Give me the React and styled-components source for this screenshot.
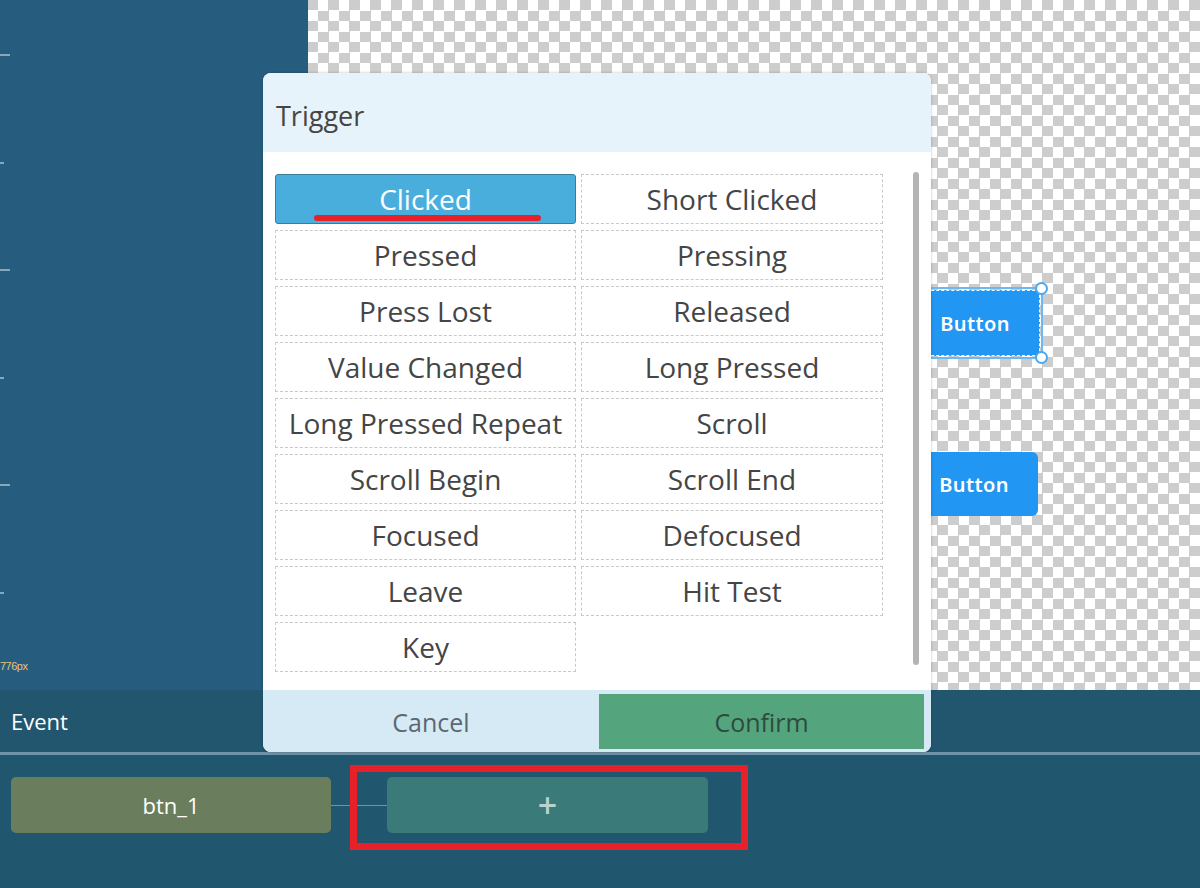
import React from 'react';
import styled, { createGlobalStyle } from 'styled-components';

const GlobalStyle = createGlobalStyle`
  html, body {
    margin: 0;
    padding: 0;
    background: #21566f;
    font-family: "Open Sans", "Noto Sans", sans-serif;
  }
`;

const triggers = [
  'Clicked',
  'Short Clicked',
  'Pressed',
  'Pressing',
  'Press Lost',
  'Released',
  'Value Changed',
  'Long Pressed',
  'Long Pressed Repeat',
  'Scroll',
  'Scroll Begin',
  'Scroll End',
  'Focused',
  'Defocused',
  'Leave',
  'Hit Test',
  'Key',
];

const Page = styled.div`
  position: relative;
  width: 1200px;
  height: 888px;
  overflow: hidden;
  display: flex;
  flex-direction: column;
  background: #21566f;
`;

const Workspace = styled.div`
  height: 690px;
  display: flex;
`;

const SidePanel = styled.div`
  width: 308px;
  background: #265d7f;
  display: flex;
  flex-direction: column;
`;

const Ruler = styled.div`
  display: flex;
  flex-direction: column;
  gap: 105.6px;
  padding-top: 54px;
`;

const Tick = styled.div`
  height: 2px;
  width: ${(p) => (p.long ? '10px' : '4px')};
  background: #86a8bd;
`;

const SizeLabel = styled.div`
  margin-top: auto;
  margin-bottom: 18px;
  font-family: "Liberation Sans", sans-serif;
  font-size: 11px;
  letter-spacing: -0.5px;
  color: #e6c27a;
`;

const Checker = styled.div`
  position: relative;
  flex: 1;
  background-color: #ffffff;
  background-image: conic-gradient(
    #cdcdcd 25%,
    #ffffff 0 50%,
    #cdcdcd 0 75%,
    #ffffff 0
  );
  background-size: 21px 21px;
  background-position: 10px 0;
`;

const CanvasButton = styled.div`
  position: absolute;
  left: 602px;
  top: ${(p) => p.top}px;
  width: ${(p) => p.w}px;
  height: ${(p) => p.h}px;
  background: #2196f3;
  border-radius: 6px;
  color: #fff;
  font-family: "Noto Sans", sans-serif;
  font-weight: 600;
  font-size: 20px;
  letter-spacing: 0.4px;
  display: flex;
  align-items: center;
  justify-content: center;
  box-sizing: border-box;
`;

const Selection = styled.div`
  position: absolute;
  left: 600px;
  top: 287px;
  width: 135px;
  height: 72px;
  border: 2px solid #6bb8f2;
  box-sizing: border-box;
  outline: 1px dashed #ffffff;
  outline-offset: -4px;
`;

const Handle = styled.div`
  position: absolute;
  right: -7px;
  ${(p) => (p.bottom ? 'bottom: -7px;' : 'top: -7px;')}
  width: 9px;
  height: 9px;
  border-radius: 50%;
  background: #fff;
  border: 2px solid #4aa8f0;
`;

const EventBar = styled.div`
  height: 62px;
  background: #22566f;
  display: flex;
  align-items: center;
  padding-left: 11px;
  color: #ffffff;
  font-size: 22px;
`;

const Divider = styled.div`
  height: 3px;
  background: #6f93a8;
`;

const Flow = styled.div`
  flex: 1;
  display: flex;
  align-items: flex-start;
  padding: 22px 11px 0;
`;

const Node = styled.div`
  position: relative;
  width: ${(p) => p.w}px;
  height: 56px;
  border-radius: 5px;
  background: ${(p) => p.bg};
  color: ${(p) => p.fg};
  display: flex;
  align-items: center;
  justify-content: center;
  font-size: ${(p) => p.size}px;
  font-weight: ${(p) => p.weight};
`;

const Connector = styled.div`
  width: 56px;
  height: 1px;
  margin-top: 28px;
  background: #6f93a8;
`;

const Highlight = styled.div`
  position: absolute;
  left: -37px;
  right: -40px;
  top: -12px;
  bottom: -17px;
  border: 7px solid #e8202a;
`;

const Dialog = styled.div`
  position: absolute;
  left: 263px;
  top: 73px;
  width: 668px;
  height: 679px;
  border-radius: 8px;
  overflow: hidden;
  display: flex;
  flex-direction: column;
  background: #fff;
  box-shadow: 0 0 3px rgba(0, 0, 0, 0.25);
`;

const DialogHeader = styled.div`
  height: 79px;
  background: #e6f3fa;
  display: flex;
  align-items: center;
  padding: 6px 0 0 13px;
  box-sizing: border-box;
  font-size: 27px;
  color: #454545;
`;

const DialogBody = styled.div`
  flex: 1;
  display: flex;
  align-items: flex-start;
  padding: 22px 12px 0;
`;

const Grid = styled.div`
  width: 608px;
  display: grid;
  grid-template-columns: 301px 302px;
  grid-auto-rows: 50px;
  gap: 6px 5px;
`;

const Cell = styled.div`
  position: relative;
  box-sizing: border-box;
  display: flex;
  align-items: center;
  justify-content: center;
  font-size: 28px;
  color: ${(p) => (p.active ? '#ffffff' : '#454545')};
  background: ${(p) => (p.active ? '#4aaedd' : '#ffffff')};
  border: 1px ${(p) => (p.active ? 'solid #3a7c9c' : 'dashed #c8c8c8')};
  border-radius: ${(p) => (p.active ? '3px' : '0')};
`;

const Underline = styled.div`
  position: absolute;
  left: 38px;
  width: 227px;
  top: 40px;
  height: 6px;
  border-radius: 3px;
  background: #e8202a;
`;

const ScrollThumb = styled.div`
  width: 6px;
  height: 493px;
  margin-left: 30px;
  margin-top: -2px;
  border-radius: 3px;
  background: #b4b4b4;
`;

const DialogFooter = styled.div`
  height: 62px;
  background: #d6eaf6;
  display: grid;
  grid-template-columns: 336px 1fr;
  padding: 4px 7px 3px 0;
  box-sizing: border-box;
`;

const FooterButton = styled.div`
  display: flex;
  align-items: center;
  justify-content: center;
  font-size: 25px;
  background: ${(p) => (p.primary ? '#54a47e' : 'transparent')};
  color: ${(p) => (p.primary ? '#2e4b3d' : '#5b6870')};
`;

const App = () => (
  <Page>
    <GlobalStyle />
    <Workspace>
      <SidePanel>
        <Ruler>
          {[true, false, true, false, true, false].map((long, i) => (
            <Tick key={i} long={long} />
          ))}
        </Ruler>
        <SizeLabel>776px</SizeLabel>
      </SidePanel>
      <Checker>
        <CanvasButton top={290} w={130} h={66}>
          Button
        </CanvasButton>
        <Selection>
          <Handle />
          <Handle bottom />
        </Selection>
        <CanvasButton top={452} w={128} h={64}>
          Button
        </CanvasButton>
      </Checker>
    </Workspace>
    <EventBar>Event</EventBar>
    <Divider />
    <Flow>
      <Node w={320} bg="#6a7e5d" fg="#ffffff" size={22} weight={400}>
        btn_1
      </Node>
      <Connector />
      <Node w={321} bg="#3a7a78" fg="#b9d2cf" size={34} weight={600}>
        +
        <Highlight />
      </Node>
    </Flow>

    <Dialog>
      <DialogHeader>Trigger</DialogHeader>
      <DialogBody>
        <Grid>
          {triggers.map((t, i) => (
            <Cell key={t} active={i === 0}>
              {t}
              {i === 0 && <Underline />}
            </Cell>
          ))}
        </Grid>
        <ScrollThumb />
      </DialogBody>
      <DialogFooter>
        <FooterButton>Cancel</FooterButton>
        <FooterButton primary>Confirm</FooterButton>
      </DialogFooter>
    </Dialog>
  </Page>
);

export default App;
